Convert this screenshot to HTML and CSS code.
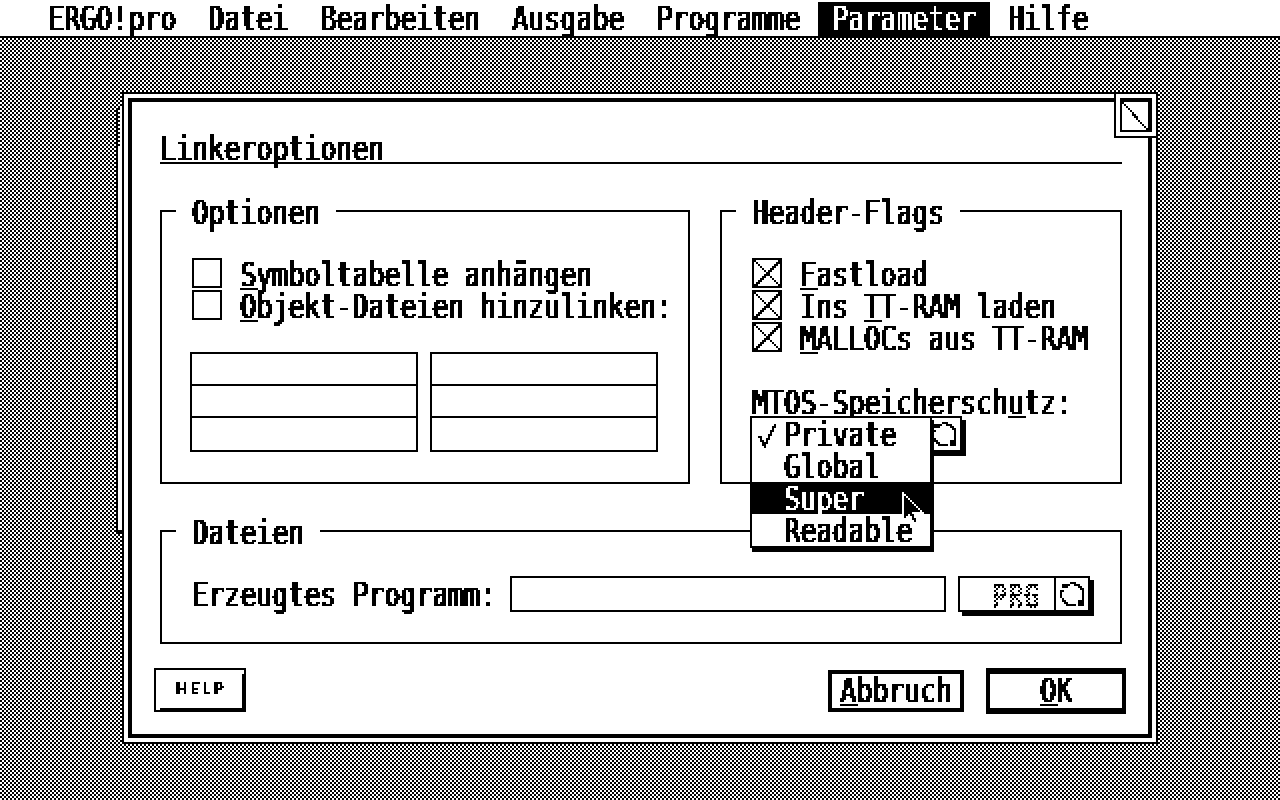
FILE: index.html
```html
<!DOCTYPE html>
<html lang="de">
<head>
<meta charset="utf-8">
<title>Linkeroptionen</title>
<link rel="stylesheet" href="styles.css">
</head>
<body>
<svg class="defs" width="0" height="0" aria-hidden="true">
  <filter id="pix" filterUnits="userSpaceOnUse" x="0" y="0" width="1280" height="800" color-interpolation-filters="sRGB">
    <feFlood x="0" y="0" width="1" height="1" flood-color="#000"/>
    <feComposite width="2" height="2"/>
    <feTile result="grid"/>
    <feComposite in="SourceGraphic" in2="grid" operator="in" result="dots"/>
    <feOffset in="dots" dx="1" dy="0" result="dx"/>
    <feOffset in="dots" dx="0" dy="1" result="dy"/>
    <feOffset in="dots" dx="1" dy="1" result="dxy"/>
    <feMerge result="blocks">
      <feMergeNode in="dots"/><feMergeNode in="dx"/><feMergeNode in="dy"/><feMergeNode in="dxy"/>
    </feMerge>
    <feComponentTransfer in="blocks">
      <feFuncR type="discrete" tableValues="0 0 1"/>
      <feFuncG type="discrete" tableValues="0 0 1"/>
      <feFuncB type="discrete" tableValues="0 0 1"/>
    </feComponentTransfer>
  </filter>
</svg>
<div class="screen">
  <nav class="menubar">
    <div class="menu"><span class="t">ERGO!pro</span></div>
    <div class="menu"><span class="t">Datei</span></div>
    <div class="menu"><span class="t">Bearbeiten</span></div>
    <div class="menu"><span class="t">Ausgabe</span></div>
    <div class="menu"><span class="t">Programme</span></div>
    <div class="menu active"><span class="t">Parameter</span></div>
    <div class="menu"><span class="t">Hilfe</span></div>
  </nav>
  <main class="desktop">
    <div class="dialog">
      <div class="inner">
        <h1 class="title"><span class="t">Linkeroptionen</span></h1>
        <div class="groups">
          <section class="group">
            <div class="legend"><span class="t">Optionen</span></div>
            <div class="checks">
              <div class="check"><span class="box"></span><span class="t"><u>S</u>ymboltabelle anhängen</span></div>
              <div class="check"><span class="box"></span><span class="t"><u>O</u>bjekt-Dateien hinzulinken:</span></div>
            </div>
            <div class="lists">
              <div class="list"><div class="cell"></div><div class="cell"></div><div class="cell last"></div></div>
              <div class="list"><div class="cell"></div><div class="cell"></div><div class="cell last"></div></div>
            </div>
          </section>
          <section class="group">
            <div class="legend"><span class="t">Header-Flags</span></div>
            <div class="checks">
              <div class="check"><span class="box on"><svg viewBox="0 0 26 26"><path d="M0 0L26 26M26 0L0 26"/></svg></span><span class="t"><u>F</u>astload</span></div>
              <div class="check"><span class="box on"><svg viewBox="0 0 26 26"><path d="M0 0L26 26M26 0L0 26"/></svg></span><span class="t">Ins <u>T</u>T-RAM laden</span></div>
              <div class="check"><span class="box on"><svg viewBox="0 0 26 26"><path d="M0 0L26 26M26 0L0 26"/></svg></span><span class="t"><u>M</u>ALLOCs aus TT-RAM</span></div>
            </div>
            <div class="label"><span class="t">MTOS-Speichersch<u>u</u>tz:</span></div>
            <div class="cycle mode">
              <div class="cycle-text"></div>
              <div class="cycle-icon"><svg viewBox="0 0 24 24"><path class="ring" d="M8 2A11 11 0 0 1 22 17"/><path class="ring" d="M16 22A11 11 0 0 1 2 7"/><path class="tip" d="M2 1H7V5H2ZM18 18H23V23H18Z"/></svg></div>
            </div>
          </section>
        </div>
        <section class="group files">
          <div class="legend"><span class="t">Dateien</span></div>
          <div class="file-row">
            <div class="file-label"><span class="t">Erzeugtes Programm:</span></div>
            <div class="file-input"></div>
            <div class="cycle prg">
              <div class="cycle-text"><span class="t gray">PRG</span></div>
              <div class="cycle-icon"><svg viewBox="0 0 24 24"><path class="ring" d="M8 2A11 11 0 0 1 22 17"/><path class="ring" d="M16 22A11 11 0 0 1 2 7"/><path class="tip" d="M2 1H7V5H2ZM18 18H23V23H18Z"/></svg></div>
            </div>
          </div>
        </section>
        <footer class="actions">
          <button class="help">HELP</button>
          <button class="btn cancel"><span class="t"><u>A</u>bbruch</span></button>
          <button class="btn ok"><span class="t"><u>O</u>K</span></button>
        </footer>
      </div>
    </div>
    <div class="backwin"><div class="ticks"></div></div>
    <div class="closebox"><div class="close-inner"><svg viewBox="0 0 26 28"><path d="M0 0L26 28"/></svg></div></div>
    <div class="popup">
      <div class="item"><svg class="tick" viewBox="0 0 20 24"><path d="M2 14L7 24L18 1" /></svg><span class="t">Private</span></div>
      <div class="item"><span class="t">Global</span></div>
      <div class="item sel"><span class="t">Super</span></div>
      <div class="item"><span class="t">Readable</span></div>
    </div>
    <svg class="cursor" viewBox="0 0 28 36"><path d="M2 2L22 22H13L17 32H13L9 24L2 30Z"/></svg>
  </main>
</div>
</body>
</html>
```
FILE: styles.css
```css
* { box-sizing: border-box; margin: 0; padding: 0; }
html, body { width: 1280px; height: 800px; overflow: hidden; background: #fff; }
.defs { position: absolute; }
.screen {
  position: relative;
  width: 1280px;
  height: 800px;
  display: flex;
  flex-direction: column;
  filter: url(#pix);
  color: #000;
  font-family: "DejaVu Sans Mono", monospace;
  font-size: 26.58px;
  font-weight: 400;
  line-height: 32px;
  background: conic-gradient(#fff 25%, #000 0 50%, #fff 0 75%, #000 0) 0 0 / 4px 4px;
}
.t {
  display: inline-block;
  white-space: pre;
  transform-origin: 0 0;
  transform: translate(-1px, -1px) scaleY(1.24);
  text-shadow: 1.5px 0 0 currentColor;
}
u { text-decoration: underline; text-decoration-thickness: 1.6px; text-underline-offset: 1px; text-decoration-skip-ink: none; }

.menubar { display: flex; height: 38px; padding-left: 32px; background: #fff; border-bottom: 2px solid #000; }
.menu { height: 36px; padding: 0 16px; }
.menu.active { background: #000; color: #fff; box-shadow: inset 2px 2px 0 #fff, inset -2px 0 0 #fff; }

.desktop { flex: 1; padding: 54px 122px 56px; }
.dialog { position: relative; z-index: 1; width: 1036px; height: 652px; border: 2px solid #000; padding: 4px; background: #fff; }
.inner { height: 100%; border: 4px solid #000; padding: 28px 26px 0 28px; }
.title { height: 34px; font: inherit; border-bottom: 2px solid #000; }

.groups { display: grid; grid-template-columns: 530px 402px; gap: 30px; height: 274px; margin-top: 46px; }
.group { border: 2px solid #000; padding: 0 30px; }
.legend { width: fit-content; height: 32px; margin: -18px 0 0 -16px; padding: 0 16px; background: #fff; }
.checks { margin-top: 30px; }
.check { display: flex; align-items: flex-end; gap: 18px; height: 32px; }
.box { flex: none; width: 30px; height: 30px; border: 2px solid #000; background: #fff; }
.box svg { display: block; width: 26px; height: 26px; }
.box path { fill: none; stroke: #000; stroke-width: 1.5; }

.lists { display: grid; grid-template-columns: 228px 228px; gap: 12px; margin: 32px 0 0 -2px; }
.list { border: 2px solid #000; }
.cell { height: 32px; border-bottom: 2px solid #000; }
.cell.last { height: 32px; border-bottom: 0; }

.label { margin-top: 32px; height: 32px; }
.cycle { display: flex; height: 36px; border: 2px solid #000; background: #fff; box-shadow: 4px 4px 0 #000; }
.mode { width: 210px; }
.cycle-text { flex: 1; padding-left: 32px; }
.cycle-icon { flex: none; width: 34px; border-left: 2px solid #000; padding: 4px; }
.cycle-icon svg { display: block; width: 24px; height: 24px; overflow: visible; }
.ring { fill: none; stroke: #000; stroke-width: 2; }
.tip { fill: #000; }
.gray {
  color: transparent;
  font-weight: 700;
  text-shadow: none;
  background: conic-gradient(#fff 25%, #000 0 50%, #fff 0 75%, #000 0) 0 0 / 4px 4px;
  -webkit-background-clip: text;
  background-clip: text;
}

.files { height: 114px; margin-top: 46px; }
.file-row { display: flex; margin-top: 30px; }
.file-label { width: 318px; height: 36px; }
.file-input { width: 436px; height: 36px; border: 2px solid #000; }
.prg { width: 132px; margin-left: 12px; }

.actions { display: flex; align-items: flex-start; margin: 24px -4px 0 -6px; }
.actions button { font: inherit; color: inherit; background: #fff; }
.actions .help {
  width: 92px;
  height: 44px;
  padding-bottom: 3px;
  border: 2px solid #000;
  font-family: "DejaVu Sans", sans-serif;
  font-size: 15px;
  font-weight: 400;
  letter-spacing: 3px;
  text-shadow: 1px 0 0 #000;
  background:
    linear-gradient(#000, #000) right bottom / 2px calc(100% - 4px) no-repeat,
    linear-gradient(#000, #000) right bottom / calc(100% - 4px) 2px no-repeat,
    #fff;
}
.btn { display: flex; justify-content: center; border-style: solid; border-color: #000; }
.btn .t { margin-top: -2px; }
.cancel { width: 136px; height: 42px; margin: 2px 0 0 auto; border-width: 4px; }
.ok { width: 140px; height: 46px; margin: 0 0 0 22px; border-width: 6px 4px; }

.backwin { position: absolute; left: 116px; top: 108px; width: 10px; height: 426px; background: #fff; border-left: 2px solid #000; border-bottom: 4px solid #000; }
.ticks { width: 2px; height: 38px; background: repeating-linear-gradient(#000 0 2px, #fff 2px 4px); }

.closebox { position: absolute; z-index: 2; left: 1114px; top: 92px; width: 44px; height: 46px; padding: 4px 4px 0 4px; background: #fff; border: 2px solid #000; }
.close-inner { width: 32px; height: 34px; border: 2px solid #000; border-width: 4px 4px 2px 2px; }
.close-inner svg { display: block; width: 26px; height: 28px; }
.close-inner path { fill: none; stroke: #000; stroke-width: 1.5; }

.popup { position: absolute; z-index: 3; left: 750px; top: 416px; width: 182px; height: 132px; background: #fff; border: 2px solid #000; box-shadow: 2px 4px 0 #000; }
.item { position: relative; height: 32px; padding-left: 32px; }
.item .t { transform: translate(-1px, -3px) scaleY(1.24); }
.item.sel { margin: 0 -4px 0 -2px; padding-left: 34px; background: #000; color: #fff; }
.tick { position: absolute; left: 5px; top: 4px; width: 20px; height: 24px; overflow: visible; }
.tick path { fill: none; stroke: #000; stroke-width: 2; }

.cursor { position: absolute; z-index: 4; left: 900px; top: 490px; width: 28px; height: 36px; }
.cursor path { fill: #000; stroke: #fff; stroke-width: 2; }
```
